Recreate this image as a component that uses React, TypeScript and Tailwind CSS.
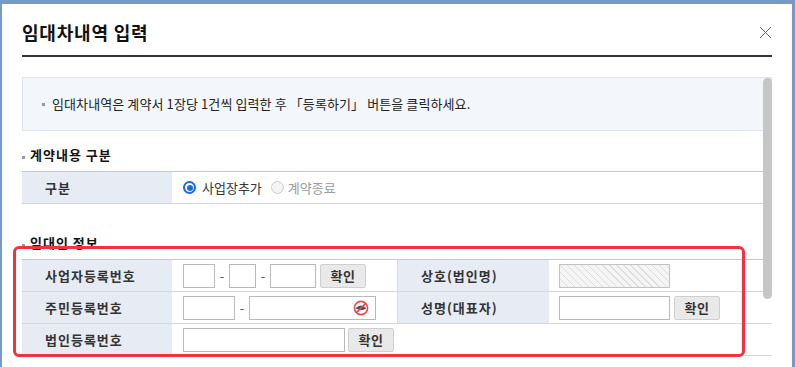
import React from 'react';

const font = { fontFamily: '"Noto Sans CJK KR", "Noto Sans", sans-serif' };

const Bullet = ({ className = '' }: { className?: string }) => (
  <span className={`inline-block shrink-0 w-[3px] h-[3px] bg-[#9a9a9a] ${className}`}></span>
);

const Input = ({ w, className = '' }: { w: string; className?: string }) => (
  <div className={`shrink-0 h-[24px] border border-[#b9b9b9] bg-white ${w} ${className}`}></div>
);

const ConfirmButton = () => (
  <button className="h-[24px] w-[46px] border border-[#cfcfcf] bg-[#e9e9e9] rounded-[2px] text-[13px] font-bold text-[#333] leading-none tracking-[0.5px]">
    확인
  </button>
);

const Dash = () => <span className="w-[14px] text-center text-[13px] text-[#555]">-</span>;

const Label = ({ children, w }: { children: React.ReactNode; w: string }) => (
  <div className={`${w} h-full bg-[#e7ecf4] flex items-center pl-[23px] text-[13px] font-bold text-[#333] tracking-[1px]`}>
    {children}
  </div>
);

const EyeOff = () => (
  <svg width="16" height="16" viewBox="0 0 16 16">
    <circle cx="8" cy="8" r="6.6" fill="#fff" stroke="#f04848" strokeWidth="1.6" />
    <path d="M2.6 8.3 Q8 2.6 13.4 8.3 Q8 12.4 2.6 8.3 Z" fill="#4a4f57" />
    <line x1="3.4" y1="12.6" x2="12.6" y2="3.4" stroke="#f04848" strokeWidth="1.6" />
  </svg>
);

const Radio = ({ checked }: { checked?: boolean }) =>
  checked ? (
    <span className="shrink-0 w-[13px] h-[13px] rounded-full border-[2px] border-[#1769e8] flex items-center justify-center bg-white">
      <span className="w-[6px] h-[6px] rounded-full bg-[#1769e8]"></span>
    </span>
  ) : (
    <span className="shrink-0 block w-[13px] h-[13px] rounded-full border border-[#cdcdcd] bg-[#f4f4f4]"></span>
  );

export default function App() {
  return (
    <div className="w-[795px] h-[367px] bg-[#7799c5] pt-[4px] pl-[2px] pr-[3px] overflow-hidden" style={font}>
      <div className="relative w-[790px] h-full bg-white">
        {/* Header */}
        <div className="h-[51px] pt-[5px] px-[20px] flex items-center justify-between">
          <h1 className="text-[18px] font-bold text-[#111] tracking-[0.8px]">임대차내역 입력</h1>
          <svg width="13" height="13" viewBox="0 0 13 13">
            <path d="M1 1 L12 12 M12 1 L1 12" stroke="#56647c" strokeWidth="1" />
          </svg>
        </div>
        <div className="mx-[20px] h-[2px] bg-[#333]"></div>

        <div className="px-[20px]">
          {/* Info box */}
          <div className="mt-[20px] h-[54px] border border-[#dfe4ec] bg-[#f3f6fb] flex items-center pl-[19px] text-[13px] text-[#222] tracking-[0.1px]">
            <Bullet className="mr-[7px]" />
            임대차내역은 계약서 1장당 1건씩 입력한 후 「등록하기」 버튼을 클릭하세요.
          </div>

          {/* Section 1 */}
          <div className="mt-[14px] h-[20px] flex items-center text-[13px] font-bold text-[#111] tracking-[1px]">
            <Bullet className="mr-[5px] mt-[5px]" />
            계약내용 구분
          </div>
          <div className="mt-[6px] h-[33px] border-t border-b border-t-[#c0c7d1] border-b-[#d0d6de] flex">
            <Label w="w-[150px]">구분</Label>
            <div className="flex-1 flex items-center pl-[11px] text-[13px]">
              <Radio checked />
              <span className="ml-[6px] text-[#333]">사업장추가</span>
              <span className="ml-[9px] flex"><Radio /></span>
              <span className="ml-[4px] text-[#9a9a9a]">계약종료</span>
            </div>
          </div>

          {/* Section 2 */}
          <div className="mt-[29px] h-[20px] flex items-center text-[13px] font-bold text-[#111] tracking-[1px]">
            <Bullet className="mr-[5px] mt-[5px]" />
            임대인 정보
          </div>
          <div className="mt-[6px] border-t border-t-[#c0c7d1]">
            <div className="h-[32px] flex border-b border-b-[#d3d8e0]">
              <Label w="w-[150px]">사업자등록번호</Label>
              <div className="w-[225px] flex items-center pl-[11px]">
                <Input w="w-[32px]" />
                <Dash />
                <Input w="w-[27px]" />
                <Dash />
                <Input w="w-[46px]" />
                <span className="ml-[4px] flex"><ConfirmButton /></span>
              </div>
              <div className="border-l border-l-[#d7dce3] h-full flex">
                <Label w="w-[151px]">상호(법인명)</Label>
              </div>
              <div className="flex-1 flex items-center pl-[10px]">
                <div className="h-[24px] w-[111px] border border-[#c3c3c3] bg-[repeating-linear-gradient(45deg,#dedede_0px,#dedede_1px,#f5f5f5_1px,#f5f5f5_5px)]"></div>
              </div>
            </div>
            <div className="h-[32px] flex border-b border-b-[#d3d8e0]">
              <Label w="w-[150px]">주민등록번호</Label>
              <div className="w-[225px] flex items-center pl-[11px]">
                <Input w="w-[52px]" />
                <Dash />
                <div className="relative h-[24px] w-[127px] border border-[#b9b9b9] bg-white">
                  <span className="absolute right-[6px] top-[3px] flex"><EyeOff /></span>
                </div>
              </div>
              <div className="border-l border-l-[#d7dce3] h-full flex">
                <Label w="w-[151px]">성명(대표자)</Label>
              </div>
              <div className="flex-1 flex items-center pl-[10px]">
                <Input w="w-[111px]" />
                <span className="ml-[4px] flex"><ConfirmButton /></span>
              </div>
            </div>
            <div className="h-[32px] flex border-b border-b-[#d3d8e0]">
              <Label w="w-[150px]">법인등록번호</Label>
              <div className="flex-1 flex items-center pl-[11px]">
                <Input w="w-[162px]" />
                <span className="ml-[3px] flex"><ConfirmButton /></span>
              </div>
            </div>
          </div>
        </div>

        {/* Scrollbar */}
        <div className="absolute left-[761px] top-[74px] w-[9px] h-[221px] rounded-full bg-[#c4c6c8]"></div>

        {/* Red highlight */}
        <div className="absolute left-[11px] top-[242px] w-[732px] h-[111px] rounded-[6px] border-[3px] border-[#f2323f] blur-[0.7px]"></div>
      </div>
    </div>
  );
}
